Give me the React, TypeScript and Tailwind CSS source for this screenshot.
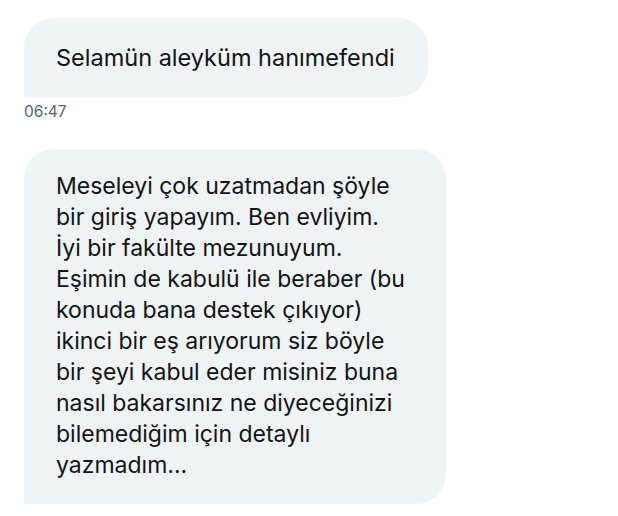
const lines = [
  "Meseleyi çok uzatmadan şöyle",
  "bir giriş yapayım. Ben evliyim.",
  "İyi bir fakülte mezunuyum.",
  "Eşimin de kabulü ile beraber (bu",
  "konuda bana destek çıkıyor)",
  "ikinci bir eş arıyorum siz böyle",
  "bir şeyi kabul eder misiniz buna",
  "nasıl bakarsınız ne diyeceğinizi",
  "bilemediğim için detaylı",
  "yazmadım...",
]

export default function App() {
  return (
    <div className="min-h-screen w-[618px] h-[516px] overflow-hidden bg-white font-['Inter','Noto_Sans',sans-serif] text-[#0f1419]">
      <div className="pl-6 pt-[18px] flex flex-col items-start">
        <div className="w-[404px] h-[79px] bg-[#eff3f4] rounded-[30px] rounded-bl-none flex items-center pl-8">
          <span className="text-[23.5px] leading-none">Selamün aleyküm hanımefendi</span>
        </div>
        <div className="mt-[6px] text-[15.5px] leading-[18px] text-[#536471]">06:47</div>

        <div className="mt-[28px] w-[422px] bg-[#eff3f4] rounded-[30px] rounded-bl-none pl-8 pt-[22px] pb-[23px]">
          {lines.map((l) => (
            <div key={l} className="text-[23px] leading-[31px] whitespace-nowrap">
              {l}
            </div>
          ))}
        </div>
      </div>
    </div>
  )
}
